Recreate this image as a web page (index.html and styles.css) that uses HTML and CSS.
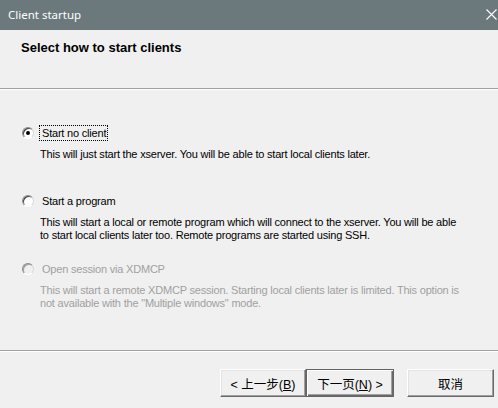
FILE: index.html
```html
<!DOCTYPE html>
<html>
<head>
<meta charset="utf-8">
<link rel="stylesheet" href="styles.css">
</head>
<body>
<div class="window">
  <div class="titlebar">
    <span class="title">Client startup</span>
    <svg class="close" width="11" height="11" viewBox="0 0 11 11"><path d="M0.5 0.5 L10.5 10.5 M10.5 0.5 L0.5 10.5" stroke="#fff" stroke-width="1.1" fill="none"/></svg>
  </div>
  <div class="header">
    <h1 class="heading">Select how to start clients</h1>
  </div>
  <div class="sep"></div>
  <div class="content">
    <div class="option">
      <div class="row">
        <span class="radio checked"></span>
        <span class="label focused">Start no client</span>
      </div>
      <p class="desc">This will just start the xserver. You will be able to start local clients later.</p>
    </div>
    <div class="option">
      <div class="row">
        <span class="radio"></span>
        <span class="label">Start a program</span>
      </div>
      <p class="desc">This will start a local or remote program which will connect to the xserver. You will be able<br>to start local clients later too. Remote programs are started using SSH.</p>
    </div>
    <div class="option disabled">
      <div class="row">
        <span class="radio"></span>
        <span class="label">Open session via XDMCP</span>
      </div>
      <p class="desc">This will start a remote XDMCP session. Starting local clients later is limited. This option is<br>not available with the "Multiple windows" mode.</p>
    </div>
  </div>
  <div class="sep"></div>
  <div class="buttons">
    <button class="btn">&lt; 上一步(<u>B</u>)</button>
    <button class="btn default">下一页(<u>N</u>) &gt;</button>
    <button class="btn cancel">取消</button>
  </div>
</div>
</body>
</html>
```
FILE: styles.css
```css
html, body {
  margin: 0;
  padding: 0;
  background: #f0f0f0;
}
.window {
  width: 498px;
  height: 408px;
  background: #f0f0f0;
  display: flex;
  flex-direction: column;
  overflow: hidden;
}
.titlebar {
  height: 30px;
  background: #6b797d;
  display: flex;
  align-items: center;
  justify-content: space-between;
  padding: 0 1px 0 8px;
  box-sizing: border-box;
}
.title {
  color: #fff;
  font-family: "Noto Sans", sans-serif;
  font-size: 11.5px;
  line-height: 16px;
  margin-top: -1px;
}
.close {
  margin-top: -2px;
}
.header {
  height: 58px;
  box-sizing: border-box;
  padding: 10px 0 0 21px;
}
.heading {
  margin: 0;
  font-family: "Liberation Sans", sans-serif;
  font-weight: bold;
  font-size: 13px;
  line-height: 15px;
  color: #000;
}
.sep {
  height: 1px;
  background: #a0a0a0;
  border-bottom: 1px solid #ffffff;
}
.content {
  height: 260px;
  box-sizing: border-box;
  padding: 35px 0 0 22px;
  font-family: "Liberation Sans", sans-serif;
  font-size: 11px;
  letter-spacing: -0.2px;
  color: #000;
}
.option {
  margin-bottom: 19px;
}
.row {
  display: flex;
  align-items: center;
  height: 16px;
}
.radio {
  width: 12px;
  height: 12px;
  box-sizing: border-box;
  border-radius: 50%;
  border: 1px solid;
  border-color: #8a8a8a #d8d8d8 #ffffff #8a8a8a;
  background: #ffffff;
  box-shadow: inset 1px 1px 0 #404040;
  position: relative;
  margin-right: 5px;
}
.radio.checked::after {
  content: "";
  position: absolute;
  left: 3px;
  top: 3px;
  width: 4px;
  height: 4px;
  border-radius: 50%;
  background: #000;
}
.label {
  padding: 0 1px 0 2px;
  line-height: 14px;
  border: 1px dotted transparent;
}
.label.focused {
  border-color: #000;
}
.desc {
  margin: 7px 0 0 18px;
  height: 26px;
  line-height: 13px;
}
.disabled {
  color: #a0a0a0;
}
.disabled .radio {
  background: #f0f0f0;
  box-shadow: inset 1px 1px 0 #a0a0a0;
}
.buttons {
  display: flex;
  padding: 17px 0 0 220px;
}
.btn {
  height: 28px;
  width: 86px;
  margin: 0;
  padding: 0;
  font-family: "Liberation Sans", "Noto Sans CJK SC", sans-serif;
  font-size: 12.5px;
  color: #000;
  background: #f0f0f0;
  border: 1px solid;
  border-color: #ffffff #696969 #696969 #ffffff;
  box-shadow: inset -1px -1px 0 #a0a0a0, inset 1px 1px 0 #e3e3e3;
}
.btn u {
  text-decoration: underline;
}
.btn.default {
  width: 88px;
  border: 1px solid #646464;
  box-shadow: inset 1px 1px 0 #ffffff, inset -1px -1px 0 #696969, inset -2px -2px 0 #a0a0a0;
}
.btn.cancel {
  margin-left: 13px;
  width: 87px;
}
```
